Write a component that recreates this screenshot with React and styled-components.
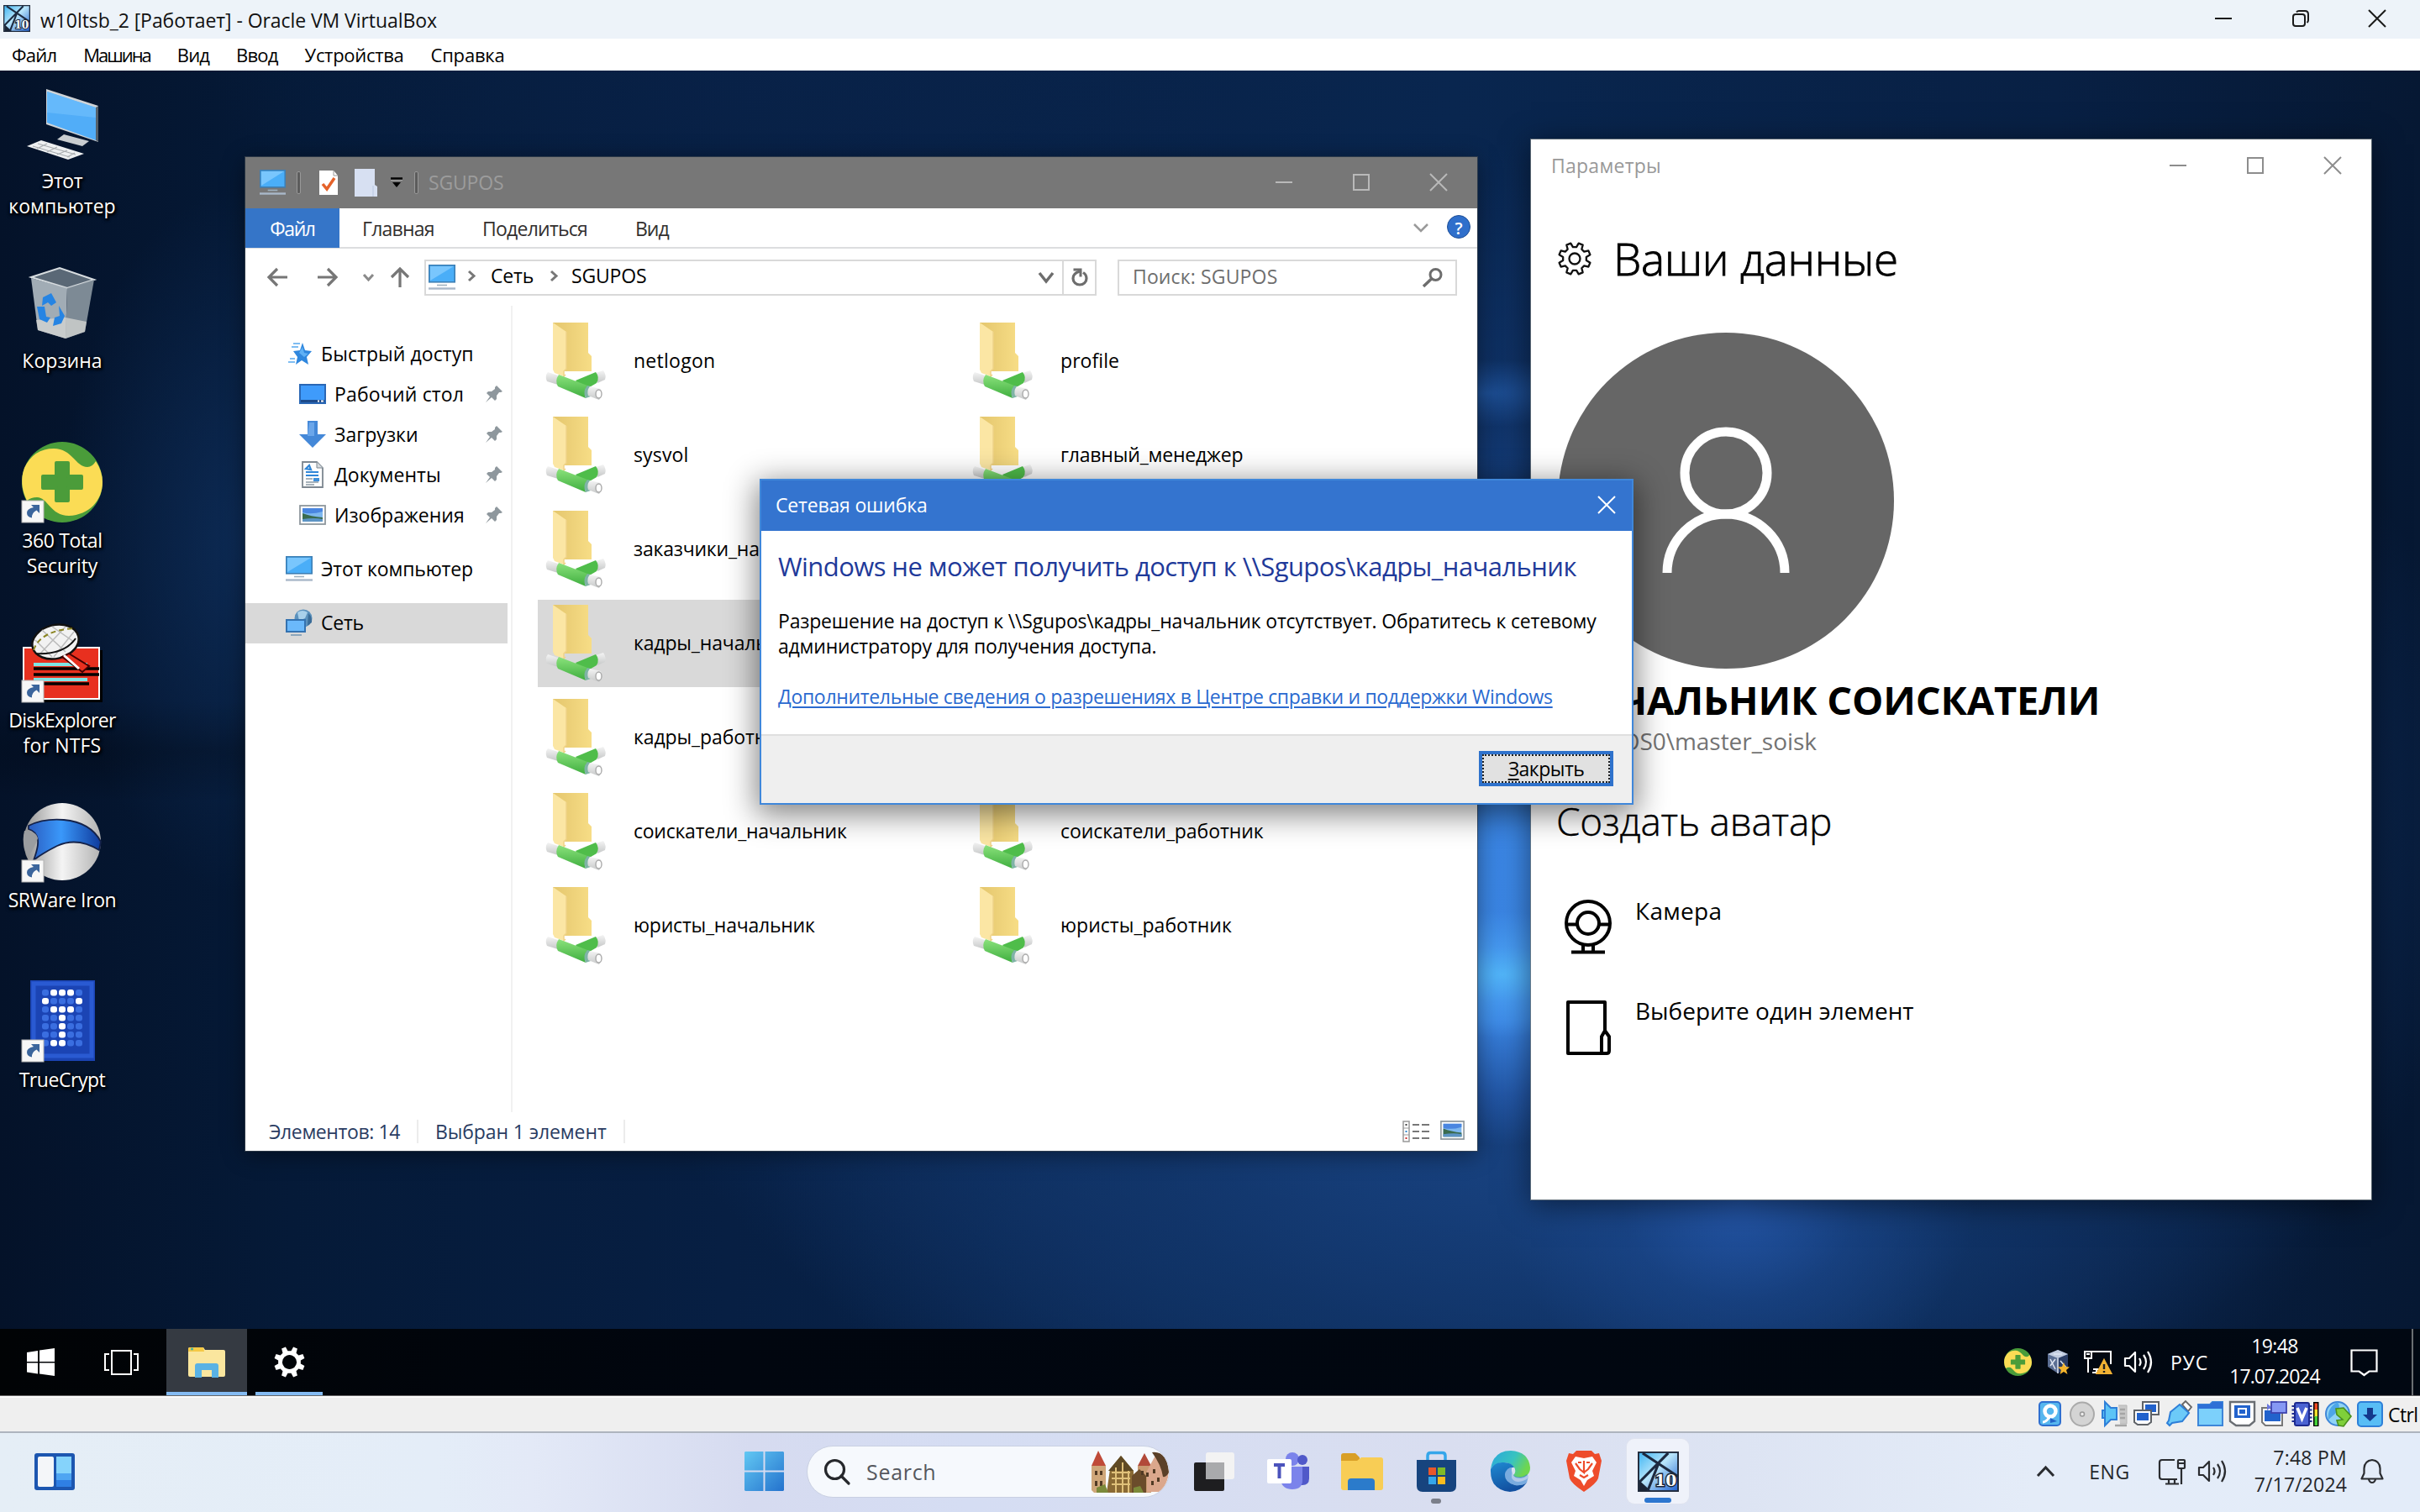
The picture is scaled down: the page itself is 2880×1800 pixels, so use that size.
import React from "react";
import styled, { createGlobalStyle, css } from "styled-components";

const GlobalStyle = createGlobalStyle`
  * { box-sizing: border-box; }
  html, body { margin: 0; padding: 0; overflow: hidden; }
  body { font-family: "Open Sans", "Noto Sans", sans-serif; font-size: 23px; line-height: 30px; color: #000; }
  svg { display: block; flex: none; overflow: visible; }
`;

/* ---------- shared ---------- */
const Text = styled.span`
  white-space: nowrap;
  letter-spacing: ${(p) => p.$ls || 0}px;
`;
const Slot = styled.div`
  display: flex;
  flex: none;
  align-items: center;
  justify-content: center;
  width: ${(p) => p.$w}px;
`;
const Spacer = styled.div`
  flex: 1;
`;

/* ---------- host frame ---------- */
const Screen = styled.div`
  width: 2880px;
  height: 1800px;
  display: grid;
  grid-template-rows: 46px 38px 1578px 42px 96px;
  overflow: hidden;
`;
const HostTitle = styled.header`
  display: flex;
  align-items: center;
  background: #edf3f9;
  padding-left: 4px;
  padding-bottom: 2px;
`;
const HostCaption = styled(Text)`
  margin-left: 12px;
  padding-top: 3px;
  color: #111;
`;
const HostControls = styled.div`
  display: flex;
  margin-left: auto;
  margin-right: 5px;
`;
const HostMenu = styled.nav`
  display: flex;
  align-items: center;
  gap: 32px;
  padding-left: 14px;
  background: #fff;
  font-size: 22px;
`;

/* ---------- guest desktop ---------- */
const Guest = styled.main`
  position: relative;
  display: grid;
  grid-template-rows: 1498px 80px;
  overflow: hidden;
  background:
    radial-gradient(ellipse 150px 75px at 1788px 1076px, #52b6fa 0%, rgba(74, 160, 245, 0.7) 45%, rgba(60, 136, 230, 0) 100%),
    radial-gradient(ellipse 240px 330px at 1790px 950px, #3b86e4 0%, #3a84e2 55%, rgba(42, 100, 190, 0.6) 82%, rgba(30, 78, 150, 0) 100%),
    radial-gradient(ellipse 280px 240px at 2070px 1345px, rgba(36, 86, 168, 0.95) 0%, rgba(28, 74, 146, 0.5) 50%, rgba(20, 60, 120, 0) 100%),
    radial-gradient(ellipse 170px 40px at 1770px 384px, rgba(38, 96, 176, 0.6) 0%, rgba(38, 96, 176, 0) 100%),
    radial-gradient(ellipse 950px 420px at 1850px 1300px, rgba(24, 66, 128, 0.9) 0%, rgba(19, 56, 110, 0.6) 50%, rgba(12, 40, 84, 0) 100%),
    radial-gradient(ellipse 1150px 820px at 1820px 900px, #1f5099 0%, #1c4a8f 35%, rgba(17, 53, 108, 0.85) 60%, rgba(8, 30, 66, 0) 100%),
    radial-gradient(ellipse 220px 420px at 290px 560px, rgba(15, 48, 94, 0.75) 0%, rgba(10, 34, 72, 0) 100%),
    radial-gradient(ellipse 500px 60px at 240px 810px, rgba(2, 12, 28, 0.8) 0%, rgba(2, 12, 28, 0) 100%),
    radial-gradient(ellipse 700px 300px at 950px 0px, rgba(10, 36, 76, 0.5) 0%, rgba(6, 22, 48, 0) 100%),
    linear-gradient(90deg, #041229 0%, #051a38 12%, #071f43 30%, #09264f 60%, #082044 85%, #061833 100%);
`;
const DesktopIcons = styled.div`
  display: flex;
  flex-direction: column;
  width: 148px;
  padding-top: 14px;
`;
const DesktopIcon = styled.div`
  display: flex;
  flex-direction: column;
  align-items: center;
  height: 214px;
  color: #fff;
  text-align: center;
  text-shadow: 0 0 3px #000, 2px 2px 3px #000, 0 2px 4px #000;
`;
const DesktopLabel = styled.div`
  display: flex;
  flex-direction: column;
  margin-top: 6px;
`;

const Windowed = styled.section`
  position: absolute;
  left: ${(p) => p.$x}px;
  top: ${(p) => p.$y}px;
  width: ${(p) => p.$w}px;
  height: ${(p) => p.$h}px;
  display: flex;
  flex-direction: column;
  background: #fff;
`;
const ExplorerWindow = styled(Windowed)`
  box-shadow: 0 0 0 1px rgba(60, 70, 80, 0.7), 0 4px 26px rgba(0, 0, 0, 0.45);
`;
const SettingsWindow = styled(Windowed)`
  box-shadow: 0 0 0 1px rgba(110, 120, 125, 0.8), 0 6px 34px rgba(0, 0, 0, 0.5);
`;
const DialogWindow = styled(Windowed)`
  border: 2px solid #3f87da;
  box-shadow: 0 8px 34px 4px rgba(0, 0, 0, 0.48);
`;

/* ---------- explorer ---------- */
const ExplorerTitle = styled.header`
  display: flex;
  align-items: center;
  height: 61px;
  padding-left: 17px;
  padding-bottom: 1px;
  background: #777;
  color: #9c9c9c;
`;
const TitleName = styled(Text)`
  margin-left: 4px;
`;
const TitleDivider = styled.i`
  width: 5px;
  height: 27px;
  border: 1px solid #989898;
  border-radius: 2px;
  background: #5c5c5c;
`;
const Controls = styled.div`
  display: flex;
  margin-left: auto;
`;
const Ribbon = styled.nav`
  display: flex;
  align-items: center;
  height: 48px;
  border-bottom: 2px solid #dcdddf;
  color: #33302f;
  padding-right: 8px;
`;
const FileTab = styled.div`
  display: flex;
  align-items: center;
  justify-content: center;
  align-self: stretch;
  width: 112px;
  margin-bottom: -1px;
  background: #3575c8;
  color: #fff;
  padding-top: 1px;
`;
const RibbonTab = styled.div`
  display: flex;
  width: ${(p) => p.$w}px;
  padding-left: 27px;
  padding-top: 2px;
`;
const HelpBadge = styled.div`
  display: grid;
  place-items: center;
  width: 28px;
  height: 28px;
  margin: -2px 0 0 22px;
  border-radius: 50%;
  background: #2f6fcb;
  border: 1px solid #1f4f96;
  color: #fff;
  font-weight: 600;
  font-size: 20px;
`;
const NavBar = styled.div`
  display: flex;
  align-items: center;
  height: 68px;
  padding-left: 18px;
`;
const AddressBox = styled.div`
  display: flex;
  align-items: center;
  width: 800px;
  height: 43px;
  border: 2px solid #d9d9d9;
  padding-left: 3px;
`;
const Crumb = styled(Text)`
  margin: -4px ${(p) => p.$mr || 0}px 0 ${(p) => p.$ml}px;
`;
const RefreshCell = styled.div`
  display: grid;
  place-items: center;
  align-self: stretch;
  width: 39px;
  border-left: 2px solid #d9d9d9;
`;
const SearchBox = styled.div`
  display: flex;
  align-items: center;
  justify-content: space-between;
  width: 404px;
  height: 43px;
  margin-left: 25px;
  padding: 0 15px 0 16px;
  border: 2px solid #d9d9d9;
  color: #6e6e6e;
`;
const SearchHint = styled(Text)`
  margin-top: -3px;
`;
const ExplorerBody = styled.div`
  display: grid;
  grid-template-columns: 318px 1fr;
  height: 960px;
`;
const Tree = styled.aside`
  border-right: 2px solid #f1f1f1;
  padding-top: 34px;
`;
const TreeItem = styled.div`
  display: flex;
  align-items: center;
  gap: 10px;
  width: 312px;
  height: 48px;
  margin-top: ${(p) => (p.$apart ? 16 : 0)}px;
  padding-left: ${(p) => (p.$nested ? 64 : 48)}px;
  padding-right: 6px;
  padding-bottom: 2px;
  background: ${(p) => (p.$active ? "#d9d9d9" : "transparent")};
`;
const PinHolder = styled.div`
  margin-left: auto;
`;
const Files = styled.div`
  display: grid;
  grid-template-columns: 500px 500px;
  grid-template-rows: repeat(7, 104px);
  gap: 8px;
  padding: 14px 0 0 30px;
`;
const FileTile = styled.div`
  grid-column: ${(p) => p.$col};
  grid-row: ${(p) => p.$row};
  display: flex;
  align-items: center;
  padding-left: 9px;
  background: ${(p) => (p.$active ? "#d9d9d9" : "transparent")};
`;
const FileName = styled(Text)`
  margin-left: 33px;
  padding-bottom: 2px;
`;
const StatusRow = styled.footer`
  display: flex;
  align-items: center;
  height: 46px;
  padding: 0 15px 0 28px;
  color: #2a3c62;
`;
const StatusCell = styled.div`
  display: flex;
  height: 28px;
  align-items: center;
  padding-right: 20px;
  margin-right: 20px;
  border-right: 2px solid #ececec;
`;
const ViewModes = styled.div`
  display: flex;
  gap: 12px;
  margin-left: auto;
`;

/* ---------- dialog ---------- */
const DialogTitle = styled.header`
  display: flex;
  align-items: center;
  justify-content: space-between;
  height: 60px;
  padding: 0 20px 2px 17px;
  background: #3474cf;
  color: #fff;
`;
const DialogBody = styled.div`
  height: 242px;
  padding: 22px 0 0 20px;
`;
const DialogHeading = styled.h1`
  margin: 0;
  font-weight: 400;
  font-size: 31px;
  line-height: 40px;
  letter-spacing: -0.57px;
  color: #1f3a9a;
  white-space: nowrap;
`;
const DialogText = styled.p`
  display: flex;
  flex-direction: column;
  margin: 30px 0 0;
`;
const DialogLink = styled.a`
  display: inline-block;
  margin-top: 30px;
  color: #2a6ad0;
  letter-spacing: -0.32px;
  white-space: nowrap;
  text-decoration: underline;
  text-decoration-thickness: 2px;
  text-underline-offset: 3px;
`;
const DialogFooter = styled.footer`
  display: flex;
  flex: 1;
  justify-content: flex-end;
  padding: 18px 22px 0 0;
  border-top: 2px solid #dfdfdf;
  background: #efefef;
`;
const CloseButton = styled.button`
  width: 160px;
  height: 42px;
  padding: 0;
  border: 4px solid #2f72cc;
  background: #e1e1e1;
  outline: 2px dotted #222;
  outline-offset: -6px;
  font: inherit;
  line-height: 30px;
  letter-spacing: -0.5px;
  color: #000;
`;
const AccessKey = styled.span`
  text-decoration: underline;
  text-decoration-thickness: 2px;
  text-underline-offset: 3px;
`;

/* ---------- settings ---------- */
const SettingsTitle = styled.header`
  display: flex;
  align-items: center;
  height: 62px;
  padding-left: 24px;
  color: #999;
`;
const SettingsBody = styled.div`
  display: flex;
  flex-direction: column;
  padding: 40px 0 0 32px;
`;
const SettingsHeading = styled.h1`
  display: flex;
  align-items: center;
  gap: 26px;
  height: 80px;
  margin: 0;
  font-weight: 300;
  font-size: 53px;
  -webkit-text-stroke: 0.9px #000;
`;
const Avatar = styled.div`
  display: grid;
  place-items: center;
  width: 400px;
  height: 400px;
  margin: 48px 0 0 0;
  border-radius: 50%;
  background: #666;
`;
const UserName = styled.h2`
  margin: 7px 0 0 4px;
  font-weight: 700;
  font-size: 47px;
  line-height: 60px;
  letter-spacing: -0.22px;
  white-space: nowrap;
`;
const UserLogin = styled.div`
  margin-left: 3px;
  font-size: 28px;
  line-height: 38px;
  letter-spacing: -0.05px;
  color: #737373;
`;
const SubHeading = styled.h3`
  margin: 46px 0 57px -2px;
  font-weight: 300;
  font-size: 46px;
  line-height: 60px;
  letter-spacing: -0.24px;
  -webkit-text-stroke: 0.4px #000;
`;
const Choice = styled.div`
  display: flex;
  align-items: flex-start;
  height: 119px;
  font-size: 28px;
  line-height: 40px;
`;
const ChoiceIcon = styled.div`
  display: flex;
  justify-content: center;
  width: 68px;
  margin: 7px 22px 0 2px;
`;

/* ---------- guest taskbar ---------- */
const GuestBar = styled.footer`
  display: flex;
  align-items: stretch;
  background: linear-gradient(90deg, #010305, #01060f 30%, #010812);
  color: #fff;
  border-bottom: 1px solid #666;
`;
const TaskButton = styled.div`
  display: flex;
  align-items: center;
  justify-content: center;
  width: 96px;
  margin-right: ${(p) => p.$mr || 0}px;
  ${(p) => p.$active && css`background-color: #353a42;`}
  ${(p) => p.$running && css`
    background-image: linear-gradient(#84bbf3, #84bbf3);
    background-size: ${p.$line}px 4px;
    background-position: center bottom;
    background-repeat: no-repeat;
  `}
`;
const GuestClock = styled.div`
  display: flex;
  flex-direction: column;
  align-items: center;
  justify-content: center;
  width: 130px;
  padding-bottom: 4px;
  line-height: 36px;
`;
const ShowDesktop = styled.div`
  width: 10px;
  margin-left: 15px;
  border-left: 2px solid #6b6e72;
`;

/* ---------- VM status bar ---------- */
const VmStatus = styled.div`
  display: flex;
  align-items: center;
  justify-content: flex-end;
  padding-bottom: 1px;
  background: #efefef;
  border-top: 2px solid #fbfbfb;
  overflow: hidden;
`;
const HostKey = styled(Text)`
  width: 38px;
  margin-left: 3px;
`;

/* ---------- host taskbar ---------- */
const HostBar = styled.footer`
  display: flex;
  align-items: center;
  padding-bottom: 3px;
  border-top: 2px solid #aeb4be;
  background: linear-gradient(90deg, #e5eef6 0%, #e4edf8 18%, #e3e9f7 22%, #d6dbf0 31%, #d5ddf3 40%, #d9def0 60%, #dde4f3 72%, #e4ecf8 84%, #e3ecf9 100%);
  color: #25272b;
`;
const SearchPill = styled.div`
  display: flex;
  align-items: center;
  width: 432px;
  height: 62px;
  margin: 0 9px 0 7px;
  padding: 0 0 0 20px;
  border-radius: 31px;
  background: #f6f9fd;
  border: 1px solid #c9d0e2;
  font-size: 25px;
  color: #55585e;
  overflow: hidden;
`;
const PillText = styled(Text)`
  margin: 0 auto 0 20px;
`;
const AppSlot = styled.div`
  position: relative;
  display: flex;
  align-items: center;
  justify-content: center;
  width: 88px;
  height: 80px;
`;
const ActiveApp = styled(AppSlot)`
  width: 74px;
  height: 77px;
  margin: 0 7px;
  border-radius: 9px;
  background: #eff2fa;
  box-shadow: 0 0 0 1px #dfe3ef;
`;
const RunningMark = styled.i`
  position: absolute;
  bottom: ${(p) => (p.$wide ? 1 : 2)}px;
  width: ${(p) => (p.$wide ? 32 : 12)}px;
  height: 6px;
  border-radius: 3px;
  background: ${(p) => (p.$wide ? "#2c76cf" : "#7b7f8a")};
`;
const HostClock = styled.div`
  display: flex;
  flex-direction: column;
  align-items: flex-end;
  width: 137px;
  padding-right: 1px;
  margin-top: -2px;
  line-height: 32px;
`;

/* ---------- icons ---------- */
const VmIcon = ({ w, h }) => (
  <svg width={w} height={h} viewBox="0 0 50 50" preserveAspectRatio="none">
    <defs>
      <linearGradient id="vmg" x1="0" y1="0" x2="1" y2="1">
        <stop offset="0" stopColor="#3db4f2" /><stop offset=".45" stopColor="#b9e6fb" /><stop offset="1" stopColor="#1f5fd0" />
      </linearGradient>
    </defs>
    <rect x="1" y="1" width="48" height="48" fill="url(#vmg)" stroke="#222c3d" strokeWidth="2" />
    <path d="M2 36L16 49H2z" fill="#1b2536" />
    <path d="M2 38L37 2M6 2L49 31M26 13L12 49" stroke="#1d2a40" strokeWidth="3.2" fill="none" />
    <text x="34" y="43" fontSize="19" fontWeight="700" textAnchor="middle" fill="#fff" stroke="#1b2536" strokeWidth="3" paintOrder="stroke" fontFamily="DejaVu Serif">10</text>
  </svg>
);
const Minimize = ({ c, s = 20, t = 2 }) => <svg width={s} height={s}><path d={`M0 ${s / 2}H${s}`} stroke={c} strokeWidth={t} /></svg>;
const Maximize = ({ c, s = 20, t = 2 }) => <svg width={s} height={s}><rect x="1" y="1" width={s - 2} height={s - 2} fill="none" stroke={c} strokeWidth={t} /></svg>;
const Cross = ({ c, s = 20, t = 2 }) => <svg width={s} height={s}><path d={`M0 0L${s} ${s}M${s} 0L0 ${s}`} stroke={c} strokeWidth={t} /></svg>;
const Restore = () => (
  <svg width="20" height="20" fill="none" stroke="#1a1a1a" strokeWidth="2">
    <rect x="1" y="5" width="14" height="14" rx="3" /><path d="M5 2.500Q6 1 8 1h7q4 0 4 4v7q0 2-1.500 3" />
  </svg>
);
const Chevron = ({ w, h, c, t = 3, dir = "down" }) => (
  <svg width={w} height={h} fill="none" stroke={c} strokeWidth={t}>
    <path d={dir === "down" ? `M1 1L${w / 2} ${h - 1}L${w - 1} 1` : dir === "up" ? `M1 ${h - 1}L${w / 2} 1L${w - 1} ${h - 1}` : `M1 1L${w - 1} ${h / 2}L1 ${h - 1}`} />
  </svg>
);
const Arrow = ({ r }) => (
  <svg width="24" height="24" viewBox="0 0 24 24" fill="none" stroke="#767676" strokeWidth="3.2">
    <path transform={`rotate(${r} 12 12)`} d="M24 12H2M12 2L2 12l10 10" />
  </svg>
);
const Monitor = ({ w = 32, h = 30 }) => (
  <svg width={w} height={h} viewBox="0 0 32 30" preserveAspectRatio="none">
    <rect x=".8" y=".8" width="30.400" height="20" fill="#4aaef8" stroke="#3d7fb5" strokeWidth="1.600" />
    <path d="M2 2h28L2 19z" fill="#79c6fd" />
    <path d="M10 24.500h12" stroke="#9fb1bf" strokeWidth="1.600" />
    <path d="M0 28.500h32" stroke="#a9b8c9" strokeWidth="2.400" />
  </svg>
);
const CheckDoc = () => (
  <svg width="24" height="31"><path d="M1 1h17l5 6v23H1z" fill="#fff" /><path d="M18 1v6h5" fill="none" stroke="#999" /><path d="M5 17l5 6 9-13" fill="none" stroke="#e5622a" strokeWidth="3.500" /></svg>
);
const BlankDoc = () => (
  <svg width="27" height="33"><path d="M0 0h24v19l3 2v12H0z" fill="#d7e0f2" /><path d="M22 20v13" stroke="#b9c6e0" /></svg>
);
const Dropdown = () => <svg width="16" height="18"><path d="M1 4.500h14" stroke="#000" strokeWidth="2.500" /><path d="M1 6.500h14" stroke="#aaa" /><path d="M3 9h10l-5 6z" fill="#000" /></svg>;
const Refresh = () => (
  <svg width="20" height="22" fill="none" stroke="#6d6d6d">
    <path d="M10 4C4.500 5.500 2 8.500 2 12.500a8 7.500 0 0 0 16 0C18 9.500 16.500 7 14 5.500" strokeWidth="3.200" />
    <path d="M2.500 2H11v8.500" strokeWidth="3" />
  </svg>
);
const Loupe = () => <svg width="24" height="23" fill="none" stroke="#6d6d6d"><circle cx="15.500" cy="8" r="6.500" strokeWidth="3" /><path d="M11 12.500L1 22" strokeWidth="3.500" /></svg>;
const Pin = () => <svg width="20" height="20" viewBox="0 0 20 20"><path d="M13 0l7 7-2 1-2 0-3 4v4l-2 2-4-4-7 6 5-7-4-4 2-2h4l4-3V2z" fill="#8e979d" /></svg>;
const Star = () => (
  <svg width="32" height="28"><path d="M20 1l3 9 8 1-6 7 2 9-8-5-7 5 2-9-5-7 8-1z" fill="#2f87de" /><path d="M20 6l2 7 5 1-5 4-6-5z" fill="#5fb0f5" /><path d="M9 2h8M7 6h8M5 20h6M3 24h8" stroke="#7fbdf2" strokeWidth="2" /></svg>
);
const DesktopGlyph = () => (
  <svg width="32" height="24"><rect x="1" y="1" width="30" height="22" fill="#3f9bfb" stroke="#2a67b5" strokeWidth="2" /><path d="M2 20.500h28" stroke="#1d4a8a" strokeWidth="3" /><path d="M22 20.500h2M26 20.500h3" stroke="#fff" strokeWidth="2" /></svg>
);
const DownGlyph = () => <svg width="32" height="32"><path d="M10 0h12v16h10L16 32 0 16h10z" fill="#4488d8" /><path d="M12 2h6v16h-8z" fill="#6ba6ea" /></svg>;
const DocGlyph = () => (
  <svg width="32" height="32"><path d="M4 1h17l7 7v23H4z" fill="#fdfdfd" stroke="#7d8790" strokeWidth="1.800" /><path d="M21 1v7h7" fill="#d5dade" stroke="#7d8790" /><path d="M8 9l4-4 2 5zM8 13h15M8 17h15" stroke="#2f86d8" strokeWidth="2.200" fill="none" /><path d="M8 21h8M8 25h15M8 28h10" stroke="#8b99a5" strokeWidth="1.600" /><path d="M17 20h7v4h-7z" fill="#3f8fd9" /></svg>
);
const PicGlyph = ({ w = 32, h = 24 }) => (
  <svg width={w} height={h} viewBox="0 0 32 24" preserveAspectRatio="none"><rect x="1" y="1" width="30" height="22" fill="#fff" stroke="#8e979d" strokeWidth="1.800" /><path d="M4 4h24v16H4z" fill="#7db7ef" /><path d="M4 4h24v4q-14 4-24 1z" fill="#4a86e0" /><path d="M4 10q10 4 24 5v5H4z" fill="#3a6b4e" /><path d="M4 17q14-2 24 0v3H4z" fill="#5c94c4" /></svg>
);
const NetworkGlyph = () => (
  <svg width="32" height="32"><circle cx="21" cy="11" r="10.500" fill="#5c92bd" /><path d="M14 4q6-4 12 0l-3 7-7 3z" fill="#a9d0ea" /><path d="M27 5q5 5 4 11l-5 4z" fill="#3a6c98" /><rect x="1" y="13" width="22" height="14" fill="#6bb9fb" stroke="#3472b0" strokeWidth="2" /><path d="M6 31h13" stroke="#8ba6bb" strokeWidth="2" /></svg>
);
const NetFolder = () => (
  <svg width="72" height="92" viewBox="0 0 72 92">
    <defs>
      <linearGradient id="fb" x1="0" y1="0" x2="1" y2="0"><stop offset="0" stopColor="#e4c66d" /><stop offset="1" stopColor="#f7dd86" /></linearGradient>
      <linearGradient id="fg" x1="0" y1="0" x2="0" y2="1"><stop offset="0" stopColor="#8be27c" /><stop offset="1" stopColor="#3fae3f" /></linearGradient>
      <linearGradient id="fe" x1="0" y1="0" x2="0" y2="1"><stop offset="0" stopColor="#f4f4f4" /><stop offset="1" stopColor="#c6c8c8" /></linearGradient>
    </defs>
    <path d="M9 0h42v36l4 4v18H22L9 40z" fill="url(#fb)" />
    <path d="M9 0l16 11v44l-3 3v6l-11-4L9 56z" fill="#fbe6a4" />
    <path d="M25 11v44l-3 3v6l2-2" fill="none" stroke="#f0d388" strokeWidth="1.500" />
    <path d="M60 60l9-3q4 6 2 11l-9 4z" fill="url(#fe)" />
    <path d="M3 59l12 4v11L2 70q-3-6 1-11z" fill="url(#fe)" />
    <path d="M36 69l24-10q5 6 1 13L44 82z" fill="#4fbd4a" />
    <path d="M16 62l34 13q-5 7-2 15L15 76q-4-7 1-14z" fill="url(#fg)" />
    <path d="M50 75q-6 7-2 15l6-2V76z" fill="#7fb3a6" />
    <path d="M53 76l13 3q3 7-2 13l-13-5q-2-6 2-11z" fill="url(#fe)" />
    <ellipse cx="63.500" cy="85" rx="3.500" ry="5" fill="#fff" stroke="#aaa" strokeWidth="1.400" />
  </svg>
);
const DetailsView = () => (
  <svg width="33" height="26">
    <path d="M1 1h7v24H1z" fill="#fff" stroke="#999" strokeWidth="1.500" /><path d="M1 9h7M1 17h7" stroke="#999" />
    <path d="M12 5h8M23 5h9M12 13h8M23 13h9M12 21h8M23 21h9" stroke="#777" strokeWidth="2.200" />
    <path d="M3.500 5h2" stroke="#444" strokeWidth="2" /><path d="M3.500 13h2" stroke="#38c" strokeWidth="2" /><path d="M3.500 21h2" stroke="#c33" strokeWidth="2" />
  </svg>
);
const gearPath = (n, ro, ri, cx, cy) => {
  const pts = [];
  for (let i = 0; i < n; i++) {
    const a = (i / n) * Math.PI * 2 - Math.PI / 2, s = Math.PI / n;
    [[-0.62, ri], [-0.36, ro], [0.36, ro], [0.62, ri]].forEach(([k, r]) => {
      pts.push(`${(cx + Math.cos(a + k * s) * r).toFixed(2)} ${(cy + Math.sin(a + k * s) * r).toFixed(2)}`);
    });
  }
  return `M${pts.join("L")}Z`;
};
const OutlineGear = () => (
  <svg width="40" height="40" fill="none" stroke="#111" strokeWidth="2.300" strokeLinejoin="round">
    <path d={gearPath(8, 19, 14, 20, 20)} transform="rotate(22.500 20 20)" /><circle cx="20" cy="20" r="6.500" />
  </svg>
);
const SolidGear = () => (
  <svg width="37" height="37"><path fillRule="evenodd" fill="#fff" d={`${gearPath(8, 18.5, 13.5, 18.5, 18.5)}M10 18.500a8.500 8.500 0 1 0 17 0a8.500 8.500 0 1 0-17 0z`} transform="rotate(22.500 18.500 18.500)" /></svg>
);
const Person = () => (
  <svg width="152" height="176" fill="none" stroke="#fff" strokeWidth="11"><circle cx="76" cy="55" r="49" /><path d="M6 174a70 70 0 0 1 140 0" /></svg>
);
const Webcam = () => (
  <svg width="56" height="66" fill="none" stroke="#000" strokeWidth="4"><circle cx="28" cy="28" r="26" /><circle cx="28" cy="28" r="13" /><path d="M2 29.500h13M41 29.500h13M22 54v8M34 54v8M8 62.500h40" /></svg>
);
const ItemDoc = () => (
  <svg width="54" height="66" fill="none" stroke="#000" strokeWidth="4"><path d="M47 38V3H3v61h46q3 0 3-3V44l-5-7-4 7v20" strokeLinejoin="round" /></svg>
);

const Shortcut = () => (
  <g><rect x="0" y="70" width="26" height="26" fill="#f7f7f7" stroke="#b5b5b5" /><path d="M11 75h10v10l-3.500-3.500q-6 3-5.500 9-6-1-6-6 0-5 8-6.500z" fill="#3b659c" /></g>
);
const BigIcon = ({ children, link }) => <svg width="96" height="96" viewBox="0 0 96 96">{children}{link && <Shortcut />}</svg>;
const PcArt = () => (
  <BigIcon>
    <path d="M29 8l62 20v43L29 50z" fill="#cfd3d6" /><path d="M30 11l58 19v39L30 48z" fill="#51adf8" /><path d="M30 11l58 19v12L30 36z" fill="#6dbdfc" opacity=".7" />
    <path d="M88 30l3-2v43l-3-2z" fill="#55606a" />
    <path d="M50 62l30 8-8 6-30-8z" fill="#c9cdd0" /><path d="M6 76l17-7 51 16-19 7z" fill="#eef0f1" /><path d="M13 76l44 13M19 73l45 13M18 79l12-6M30 83l12-6M42 86l12-5M54 89l9-5" stroke="#a9adb0" strokeWidth="1.200" />
  </BigIcon>
);
const BinArt = () => (
  <BigIcon>
    <path d="M11 18L45 7l41 14-32 10z" fill="#5a6876" stroke="#d8dde0" strokeWidth="2" />
    <path d="M11 19l43 12-2 60-33-10z" fill="#aab4bd" opacity=".95" /><path d="M54 31l32-10-11 62-23 8z" fill="#84909b" opacity=".95" />
    <path d="M17 69l35-3 25 5-2 12-23 8-33-10z" fill="#d7d7d4" opacity=".75" />
    <path d="M25 42l10-5 6 11-6 4-4-4-7 4zM18 53l9 0 2 12 5 1-4 6-9-4zM44 52l7 12-4 9-10 3 2-10 6-2z" fill="#2684e3" />
  </BigIcon>
);
const Mark360 = () => (
  <g>
    <circle cx="48" cy="48" r="48" fill="#4a9c3a" />
    <path d="M3 31Q14 8 38 8c22 0 26 22 40 22q6 0 10-7 8 12 8 25c0 22-16 39-40 40C34 88 31 66 18 66q-7 0-12 4-10-20-3-39z" fill="#fbdc55" />
    <path d="M41 25h14v16h16v14H55v15H41V55H25V41h16z" fill="#4b9c3a" stroke="#4b9c3a" strokeWidth="4" strokeLinejoin="round" />
  </g>
);
const DiskArt = () => (
  <BigIcon link>
    <rect x="6" y="34" width="90" height="62" fill="#000" /><rect x="2" y="31" width="90" height="61" fill="#e8301f" stroke="#fff" strokeWidth="2" />
    <path d="M14 51h64M14 69h64" stroke="#7fe5e5" strokeWidth="4" /><path d="M14 56h78M14 63h78M14 74h66" stroke="#000" strokeWidth="3.500" />
    <ellipse cx="40" cy="24" rx="28" ry="20" fill="#f2f2f2" stroke="#111" strokeWidth="2.500" transform="rotate(-14 40 24)" />
    <path d="M24 10l28 26M36 6l26 18M16 22l20 20M52 6L22 38M62 12L38 42" stroke="#bbb" strokeWidth="1.500" />
    <path d="M14 34q8-24 50-26" fill="none" stroke="#8a8420" strokeWidth="2" strokeDasharray="6 4" />
    <path d="M16 38q34 2 48-18" fill="none" stroke="#111" strokeWidth="2" />
    <path d="M56 38l24 15-8 7-24-18z" fill="#e8301f" stroke="#400" strokeWidth="2" /><path d="M50 40l18 16" stroke="#fff" strokeWidth="3" />
  </BigIcon>
);
const IronArt = () => (
  <BigIcon link>
    <defs>
      <linearGradient id="ib" x1="0" y1="0" x2="1" y2="0"><stop offset="0" stopColor="#2a5cc0" /><stop offset=".45" stopColor="#3a98fa" /><stop offset="1" stopColor="#0f3a9c" /></linearGradient>
      <linearGradient id="is" x1="0" y1="0" x2="1" y2="0"><stop offset="0" stopColor="#8f8f8f" /><stop offset=".5" stopColor="#f4f4f4" /><stop offset="1" stopColor="#b2b2b2" /></linearGradient>
    </defs>
    <circle cx="48" cy="48" r="46" fill="url(#is)" />
    <path d="M8 29q18-9 42-7 32 3 44 26l-2 10Q66 42 42 53 24 62 14 70q6-16 5-24-1-10-11-13z" fill="url(#ib)" stroke="#14224a" strokeWidth="1.800" />
    <path d="M3 35q14 0 16 9-4 12-12 22-8-15-4-31z" fill="#9b9da0" />
  </BigIcon>
);
const dots = ["01110", "10001", "01110", "00100", "00100", "00100", "01100"];
const TrueArt = () => (
  <BigIcon link>
    <rect x="10" y="-1" width="77" height="96" fill="#1b44b4" /><rect x="14" y="3" width="69" height="86" fill="none" stroke="#2a5ad2" strokeWidth="5" />
    {dots.map((row, y) => row.split("").map((d, x) => (
      <rect key={`${x}-${y}`} x={24 + x * 10} y={10 + y * 10} width="8" height="7.500" rx="3" fill={d === "1" ? "#fff" : "#3a6ee0"} />
    )))}
  </BigIcon>
);

const WinLogo = () => (
  <svg width="33" height="33" fill="#fff"><path d="M0 5l13-2v13H0zM15 2.500L33 0v16H15zM0 17.500h13v13L0 28.500zM15 17.500h18V33l-18-2.500z" /></svg>
);
const TaskViewGlyph = () => (
  <svg width="41" height="30" fill="none" stroke="#fff" strokeWidth="2"><rect x="9" y="1" width="23" height="28" /><path d="M6 5H1v19h5M35 5h5v19h-5" /></svg>
);
const FolderGlyph = () => (
  <svg width="44" height="36"><path d="M0 2q0-2 2-2h16l2 3h22q2 0 2 2v28q0 2-2 2H2q-2 0-2-2z" fill="#fae69e" /><path d="M0 2q0-2 2-2h16l1 5H0z" fill="#f5c945" /><path d="M3 2h3" stroke="#4bb4a0" strokeWidth="2.500" /><path d="M8 36V22q0-3 3-3h22q3 0 3 3v14h-8v-9H16v9z" fill="#5ab2e4" /></svg>
);
const TrayShield = () => <svg width="33" height="33" viewBox="0 0 96 96"><Mark360 /></svg>;
const VBoxCube = () => (
  <svg width="27" height="31"><path d="M13 1l12 5v15l-12 8L1 21V6z" fill="#5b6e93" /><path d="M13 11l12-5v15l-12 8z" fill="#2c3e66" /><path d="M13 1l12 5-12 5L1 6z" fill="#c3cde0" /><path d="M13 11v18M4 12l6 12M10 12l-6 8M16 14l7 8M8 6h10" stroke="#dfe6f2" strokeWidth="1.500" /><path d="M20 16l2 5 5 .5-4 3.500 1.500 5-4.500-3-4.500 3 1.500-5-4-3.500 5-.5z" fill="#f5b52c" /></svg>
);
const NetWarn = () => (
  <svg width="34" height="30" fill="none" stroke="#fff" strokeWidth="2"><path d="M10 2h22v15M11 23h8M15 23v4M10 27h8" /><rect x="1" y="2" width="8" height="8" /><path d="M3 5h4M5 10v17" /><path d="M24 12l8.500 16h-17z" fill="#f2b233" stroke="#f2b233" /><path d="M24 17v6M24 25v2" stroke="#222" strokeWidth="2.400" /></svg>
);
const Speaker = ({ c }) => (
  <svg width="34" height="29" fill="none" stroke={c} strokeWidth="2.200" strokeLinejoin="round"><path d="M1 10h5l7-7v23l-7-7H1z" /><path d="M18 10q3 4.500 0 9M23 6q6 8.500 0 17M28 2q8 12.500 0 25" /></svg>
);
const NoteGlyph = () => <svg width="33" height="32" fill="none" stroke="#fff" strokeWidth="2.200"><path d="M1.500 1.500h30v25h-9l-6 4.500-6-4.500h-9z" /></svg>;

/* VM device indicators */
const Dev = ({ children, w = 31 }) => <svg width={w} height="31" viewBox={`0 0 ${w} 31`}>{children}</svg>;
const devices = [
  <Dev w={28}><rect x="1" y="1" width="25" height="28" rx="4" fill="#56b6ee" stroke="#2e6fd0" strokeWidth="2" /><circle cx="14" cy="12" r="6.500" fill="none" stroke="#fff" strokeWidth="4.500" /><path d="M5 25q4 0 8-6" stroke="#fff" strokeWidth="3" fill="none" /><path d="M14 20l8 4-8 2z" fill="#2363c8" /></Dev>,
  <Dev><circle cx="15" cy="15.500" r="14" fill="#d4d4d4" stroke="#aaa" strokeWidth="2" /><circle cx="15" cy="15.500" r="2.500" fill="#eee" stroke="#999" strokeWidth="1.500" /></Dev>,
  <Dev><path d="M20 5h10v22h-8" fill="#c9c9c9" stroke="#b5b5b5" /><path d="M22 10h6M22 15h6M22 20h6M16 29h14" stroke="#a5a5a5" strokeWidth="2.500" /><path d="M1 11h4v9H1z" fill="#5cc4f6" stroke="#2e7fd8" strokeWidth="2" /><path d="M4 1l7 7h7v14h-7l-7 7z" fill="#5cc4f6" stroke="#2e7fd8" strokeWidth="2" /></Dev>,
  <Dev><rect x="11" y="1" width="19" height="15" fill="#fff" stroke="#5f6368" strokeWidth="2" /><rect x="14" y="4" width="13" height="9" fill="#2262cc" /><path d="M1 11h20v14l-4 3H5l-4-3z" fill="#fff" stroke="#5f6368" strokeWidth="2" /><rect x="4" y="14" width="14" height="9" fill="#2262cc" /></Dev>,
  <Dev><path d="M20 4l4-4 7 7-4 5z" fill="#fff" stroke="#666" strokeWidth="1.800" /><path d="M17 4l11 10-8 10-12 2-3 3-3-3 2-3 2-10z" fill="#6ccaf8" stroke="#2e7fd8" strokeWidth="2" /></Dev>,
  <Dev><path d="M1 4h14l3-3h12v28H1z" fill="#7cd0fb" stroke="#3e86d8" strokeWidth="2" /><path d="M1 4h14l3-3h12v8H1z" fill="#2f70d6" /></Dev>,
  <Dev><path d="M1 1h29v23l-6 5H8l-7-5z" fill="#fff" stroke="#6a6e73" strokeWidth="2.400" /><rect x="6" y="5" width="19" height="15" fill="#2262cc" /><rect x="11" y="9" width="9" height="7" fill="none" stroke="#fff" strokeWidth="2" /></Dev>,
  <Dev><path d="M1 8h24v21H5l-4-4z" fill="#fff" stroke="#777" strokeWidth="2" /><path d="M4 11h19v13H4z" fill="#2262cc" /><rect x="12" y="1" width="18" height="13" fill="#8698f4" stroke="#3e43ae" strokeWidth="1.800" /><path d="M7 3l5 4-5 4z" fill="#6a78e0" /></Dev>,
  <Dev w={32}><rect x="3" y="2" width="17" height="27" rx="2" fill="#4a62d2" stroke="#1d2a8f" strokeWidth="2" /><path d="M1 5v22M22 5v22" stroke="#1d2a8f" strokeWidth="3" strokeDasharray="2 2.500" /><path d="M6 8l5.500 13L17 8" fill="none" stroke="#fff" strokeWidth="3.500" /><rect x="25" y="1" width="6.500" height="29" fill="#000" /><rect x="26.500" y="2.500" width="3.500" height="8" fill="#f04a24" /><rect x="26.500" y="10" width="3.500" height="9" fill="#f5e02c" /><rect x="26.500" y="18" width="3.500" height="11" fill="#46d23a" /></Dev>,
  <Dev><circle cx="15" cy="15" r="14" fill="#8fd3f5" stroke="#3e86d8" strokeWidth="2" /><path d="M4 22Q2 8 15 1q5 8-3 14z" fill="#4da6e8" /><path d="M13 9l9-1 9 10-9 12-6-1-2-6 7-1-7-6z" fill="#7fcf3a" stroke="#4a8f1e" strokeWidth="1.600" /></Dev>,
  <Dev><rect x="1" y="1" width="29" height="29" rx="4" fill="#58bdf5" stroke="#2e7fd8" strokeWidth="2" /><path d="M12 8h7v8h5l-8.500 8L7 16h5z" fill="#14388c" /></Dev>,
];

/* host taskbar icons */
const Widgets = () => (
  <svg width="48" height="44"><rect width="48" height="44" rx="3" fill="#1c56b0" /><rect x="4" y="4" width="19" height="36" rx="2" fill="#f4f6f9" /><path d="M26 4h18v20H26z" fill="#85d3fb" /><path d="M26 24h18v8H26z" fill="#4fa5f2" /><path d="M26 32h18v8H26z" fill="#2f7fe4" /></svg>
);
const Win11 = () => (
  <svg width="47" height="47"><defs><linearGradient id="w11" x1="0" y1="0" x2="1" y2="1"><stop offset="0" stopColor="#62c8f3" /><stop offset="1" stopColor="#2472cd" /></linearGradient></defs><path d="M1 0h21.500v22.500H0V1zM24.500 0H46l1 1v21.500H24.500zM0 24.500h22.500V47H1l-1-1zM24.500 24.500H47V46l-1 1H24.500z" fill="url(#w11)" /></svg>
);
const PillLoupe = () => <svg width="30" height="30" fill="none" stroke="#26282c" strokeWidth="3.200"><circle cx="12.500" cy="12.500" r="11" /><path d="M20 20l9 9" strokeLinecap="round" /></svg>;
const Town = () => (
  <svg width="92" height="50">
    <path d="M0 18h17v32H3l-3-3z" fill="#cfa77a" /><path d="M8 0l9 18H0z" fill="#bf4a38" />
    <path d="M22 22L35 6l15 18v26H18z" fill="#8a6a34" /><path d="M35 6l15 18H20z" fill="#5f4a24" /><path d="M24 26h22M24 33h22M24 40h22M29 20v30M37 14v36M44 24v26" stroke="#e0c17a" strokeWidth="2" />
    <path d="M55 18h16v32H55z" fill="#c99b72" /><path d="M63 3l8 15H55z" fill="#b24a3a" /><path d="M48 30l9-8 8 8v20H48z" fill="#6b4c2b" />
    <path d="M66 24L77 4q12 6 15 20-1 16-10 25H66z" fill="#dba78c" /><path d="M72 2q18-2 20 24-3 6-7 5-2-14-13-29z" fill="#5b4028" />
    <path d="M4 24h3v5H4zM10 24h3v5h-3zM4 36h3v6H4zM10 36h3v6h-3zM59 24h3v5h-3zM65 26h3v5h-3zM73 22h3v5h-3zM78 32h3v5h-3zM71 36h3v5h-3z" fill="#513a24" />
    <path d="M6 50v-6l10-4 4 10zM50 50v-6l8-2 4 8z" fill="#7c8a3a" />
  </svg>
);
const TaskView11 = () => <svg width="48" height="46"><rect x="14" y="0" width="34" height="32" rx="3" fill="#f3f3f3" /><rect x="0" y="12" width="36" height="34" rx="2" fill="#1e1e20" /><path d="M14 12h22v20H14z" fill="#a9aaac" /></svg>;
const Teams = () => (
  <svg width="50" height="45"><circle cx="30" cy="8" r="8" fill="#7b83eb" /><circle cx="42" cy="9" r="6" fill="#5059c9" /><path d="M34 17h16v14q0 8-8 8h-8z" fill="#5059c9" /><path d="M16 17h26v16q0 11-12 11t-14-11z" fill="#7b83eb" /><rect x="0" y="8" width="29" height="29" rx="2" fill="#fff" /><path d="M8 15h13M14.500 15v16" stroke="#4b53bc" strokeWidth="4" /></svg>
);
const Folder11 = () => (
  <svg width="50" height="44"><path d="M0 3q0-3 3-3h14l5 5v6H0z" fill="#d99f26" /><path d="M0 9h19l5-4h23q3 0 3 3v33q0 3-3 3H3q-3 0-3-3z" fill="#f8cd55" /><path d="M8 44V34q0-4 4-4h24q4 0 4 4v10z" fill="#2b7bcb" /></svg>
);
const Store = () => (
  <svg width="47" height="48"><path d="M13 10V5q0-3.500 3.500-3.500h14Q34 1.500 34 5v5" fill="none" stroke="#35a6ea" strokeWidth="3.500" /><path d="M0 10h47v31q0 7-7 7H7q-7 0-7-7z" fill="#17447e" /><path d="M14 19h9v9h-9z" fill="#e9572b" /><path d="M25 19h9v9h-9z" fill="#7fba28" /><path d="M14 30h9v9h-9z" fill="#35a6ea" /><path d="M25 30h9v9h-9z" fill="#fbbc1e" /></svg>
);
const Edge = () => (
  <svg width="48" height="49">
    <defs>
      <linearGradient id="eg" x1="0" y1="0" x2="1" y2=".4"><stop offset="0" stopColor="#2aa7dc" /><stop offset=".6" stopColor="#38c3c0" /><stop offset="1" stopColor="#6fd64f" /></linearGradient>
      <linearGradient id="ed" x1="0" y1="0" x2=".4" y2="1"><stop offset="0" stopColor="#1f8ad2" /><stop offset="1" stopColor="#1250a0" /></linearGradient>
    </defs>
    <path d="M1 22Q4 0 25 0q21 1 23 20 0 11-12 12-7 0-8-3 4-4 1-9-4-6-12-6Q6 14 1 22z" fill="url(#eg)" />
    <path d="M1 22q5-9 16-8 9 0 12 6-9-1-11 8 0 10 12 13 8 1 14-3-8 11-20 11Q0 47 1 22z" fill="url(#ed)" />
    <path d="M18 28q0-7 8-8-1 9 6 11 7 1 12-3l2 2-2 8q-6 4-14 3-12-3-12-13z" fill="#2a7fcf" opacity=".55" />
    <path d="M29 20q3 5-1 9 1 4 9 4 8-1 11-9 0 6-4 10-12 6-17 0-3-4 2-14z" fill="#d8def0" opacity=".6" />
  </svg>
);
const Brave = () => (
  <svg width="42" height="49"><path d="M8 4l4-4h18l4 4 5-1 3 9-4 21q-2 6-17 16Q6 39 4 33L0 12l3-9z" fill="#ee4c2b" /><path d="M21 9l10-2 5 7-5 10 2 6-8 5-4 7-4-7-8-5 2-6-5-10 5-7z" fill="#fff" /><path d="M21 12v14l-5-4-5-7M21 26l5-4 5-7M16 29l5 3 5-3M14 14h4M24 14h4" stroke="#ee4c2b" strokeWidth="2.200" fill="none" /></svg>
);
const MonitorLine = () => (
  <svg width="33" height="32" fill="none" stroke="#2a2c30" strokeWidth="2.200"><path d="M19 2H4Q1 2 1 5v17q0 3 3 3h18M8 30.500h16M12 25v5M19 25v5" /><rect x="23" y="2" width="8" height="10" rx="1" /><path d="M27 12v19M23 6h8" /></svg>
);
const Bell = () => (
  <svg width="28" height="29" fill="none" stroke="#2a2c30" strokeWidth="2.200" strokeLinejoin="round"><path d="M14 1q-9 1-9.500 10v6L1.500 23.500h25L23.500 17v-6Q23 2 14 1z" /><path d="M10 24q1 4 4 4t4-4" /></svg>
);

/* ---------- data ---------- */
const menu = [["Файл", -0.75], ["Машина", -2.05], ["Вид", -0.85], ["Ввод", -0.8], ["Устройства", -0.3], ["Справка", -0.2]];
const shortcuts = [
  { art: <PcArt />, lines: [["Этот", -0.4], ["компьютер", 0]] },
  { art: <BinArt />, lines: [["Корзина", 0.05]] },
  { art: <BigIcon link><Mark360 /></BigIcon>, lines: [["360 Total", -0.36], ["Security", -0.15]] },
  { art: <DiskArt />, lines: [["DiskExplorer", -0.7], ["for NTFS", 0.17]] },
  { art: <IronArt />, lines: [["SRWare Iron", -0.38]] },
  { art: <TrueArt />, lines: [["TrueCrypt", -0.45]] },
];
const tree = [
  { icon: <Star />, name: "Быстрый доступ", ls: 0.08 },
  { icon: <DesktopGlyph />, name: "Рабочий стол", ls: 0.17, nested: true },
  { icon: <DownGlyph />, name: "Загрузки", ls: 0.04, nested: true },
  { icon: <DocGlyph />, name: "Документы", ls: 0.11, nested: true },
  { icon: <PicGlyph />, name: "Изображения", ls: 0, nested: true },
  { icon: <Monitor />, name: "Этот компьютер", ls: -0.17, apart: true },
  { icon: <NetworkGlyph />, name: "Сеть", ls: -0.24, apart: true, active: true },
];
const files = [
  ["netlogon", 0.26, 1, 1], ["sysvol", 0.15, 1, 2], ["заказчики_начальник", -0.2, 1, 3], ["кадры_начальник", -0.15, 1, 4],
  ["кадры_работник", -0.1, 1, 5], ["соискатели_начальник", -0.25, 1, 6], ["юристы_начальник", -0.22, 1, 7],
  ["profile", 0.06, 2, 1], ["главный_менеджер", -0.18, 2, 2], ["соискатели_работник", -0.08, 2, 6], ["юристы_работник", 0.02, 2, 7],
];

function Explorer() {
  return (
    <ExplorerWindow $x={292} $y={103} $w={1466} $h={1183}>
      <ExplorerTitle>
        <Slot $w={31}><Monitor w={31} h={30} /></Slot>
        <Slot $w={30}><TitleDivider /></Slot>
        <Slot $w={41}><CheckDoc /></Slot>
        <Slot $w={49}><BlankDoc /></Slot>
        <Slot $w={24}><Dropdown /></Slot>
        <Slot $w={22}><TitleDivider /></Slot>
        <TitleName $ls={-0.17}>SGUPOS</TitleName>
        <Controls>
          <Slot $w={92}><Minimize c="#b9b9b9" /></Slot>
          <Slot $w={92}><Maximize c="#b9b9b9" /></Slot>
          <Slot $w={92}><Cross c="#b9b9b9" /></Slot>
        </Controls>
      </ExplorerTitle>
      <Ribbon>
        <FileTab><Text $ls={-1.4}>Файл</Text></FileTab>
        <RibbonTab $w={143}><Text $ls={-0.8}>Главная</Text></RibbonTab>
        <RibbonTab $w={182}><Text $ls={-0.77}>Поделиться</Text></RibbonTab>
        <RibbonTab $w={100}><Text $ls={-1}>Вид</Text></RibbonTab>
        <Spacer />
        <Chevron w={18} h={10} c="#9a9a9a" t={2.5} />
        <HelpBadge>?</HelpBadge>
      </Ribbon>
      <NavBar>
        <Slot $w={40}><Arrow r={0} /></Slot>
        <Slot $w={80}><Arrow r={180} /></Slot>
        <Slot $w={16}><Chevron w={13} h={8} c="#8a8a8a" /></Slot>
        <Slot $w={59}><Arrow r={90} /></Slot>
        <AddressBox>
          <Monitor />
          <Crumb $ml={15}><Chevron w={8} h={13} c="#777" dir="right" /></Crumb>
          <Crumb $ml={19} $ls={-0.2}>Сеть</Crumb>
          <Crumb $ml={20}><Chevron w={8} h={13} c="#777" dir="right" /></Crumb>
          <Crumb $ml={17} $ls={-0.17}>SGUPOS</Crumb>
          <Spacer />
          <Slot $w={38}><Chevron w={18} h={12} c="#6d6d6d" t={3.5} /></Slot>
          <RefreshCell><Refresh /></RefreshCell>
        </AddressBox>
        <SearchBox><SearchHint $ls={0.14}>Поиск: SGUPOS</SearchHint><Loupe /></SearchBox>
      </NavBar>
      <ExplorerBody>
        <Tree>
          {tree.map((t) => (
            <TreeItem key={t.name} $nested={t.nested} $apart={t.apart} $active={t.active}>
              {t.icon}
              <Text $ls={t.ls}>{t.name}</Text>
              {t.nested && <PinHolder><Pin /></PinHolder>}
            </TreeItem>
          ))}
        </Tree>
        <Files>
          {files.map(([name, ls, col, row]) => (
            <FileTile key={name} $col={col} $row={row} $active={name === "кадры_начальник"}>
              <NetFolder />
              <FileName $ls={ls}>{name}</FileName>
            </FileTile>
          ))}
        </Files>
      </ExplorerBody>
      <StatusRow>
        <StatusCell><Text $ls={-0.4}>Элементов: 14</Text></StatusCell>
        <StatusCell><Text $ls={-0.1}>Выбран 1 элемент</Text></StatusCell>
        <ViewModes><DetailsView /><PicGlyph w={29} h={23} /></ViewModes>
      </StatusRow>
    </ExplorerWindow>
  );
}

function Settings() {
  return (
    <SettingsWindow $x={1822} $y={82} $w={1000} $h={1262}>
      <SettingsTitle>
        <Text $ls={0.25}>Параметры</Text>
        <Controls>
          <Slot $w={92}><Minimize c="#8d8d8d" /></Slot>
          <Slot $w={92}><Maximize c="#8d8d8d" /></Slot>
          <Slot $w={92}><Cross c="#8d8d8d" /></Slot>
        </Controls>
      </SettingsTitle>
      <SettingsBody>
        <SettingsHeading><OutlineGear /><Text $ls={-0.2}>Ваши данные</Text></SettingsHeading>
        <Avatar><Person /></Avatar>
        <UserName>НАЧАЛЬНИК СОИСКАТЕЛИ</UserName>
        <UserLogin>SGUPOS0\master_soisk</UserLogin>
        <SubHeading>Создать аватар</SubHeading>
        <Choice><ChoiceIcon><Webcam /></ChoiceIcon><Text $ls={0.3}>Камера</Text></Choice>
        <Choice><ChoiceIcon><ItemDoc /></ChoiceIcon><Text $ls={0}>Выберите один элемент</Text></Choice>
      </SettingsBody>
    </SettingsWindow>
  );
}

function ErrorDialog() {
  return (
    <DialogWindow $x={904} $y={486} $w={1040} $h={388}>
      <DialogTitle><Text $ls={-0.18}>Сетевая ошибка</Text><Cross c="#fff" /></DialogTitle>
      <DialogBody>
        <DialogHeading>{"Windows не может получить доступ к \\\\Sgupos\\кадры_начальник"}</DialogHeading>
        <DialogText>
          <Text $ls={-0.18}>{"Разрешение на доступ к \\\\Sgupos\\кадры_начальник отсутствует. Обратитесь к сетевому"}</Text>
          <Text $ls={-0.2}>администратору для получения доступа.</Text>
        </DialogText>
        <DialogLink>Дополнительные сведения о разрешениях в Центре справки и поддержки Windows</DialogLink>
      </DialogBody>
      <DialogFooter><CloseButton><AccessKey>З</AccessKey>акрыть</CloseButton></DialogFooter>
    </DialogWindow>
  );
}

export default function App() {
  return (
    <Screen>
      <GlobalStyle />
      <HostTitle>
        <VmIcon w={32} h={32} />
        <HostCaption $ls={-0.07}>w10ltsb_2 [Работает] - Oracle VM VirtualBox</HostCaption>
        <HostControls>
          <Slot $w={92}><Minimize c="#1a1a1a" /></Slot>
          <Slot $w={91}><Restore /></Slot>
          <Slot $w={92}><Cross c="#1a1a1a" /></Slot>
        </HostControls>
      </HostTitle>
      <HostMenu>{menu.map(([m, ls]) => <Text key={m} $ls={ls}>{m}</Text>)}</HostMenu>
      <Guest>
        <DesktopIcons>
          {shortcuts.map((s) => (
            <DesktopIcon key={s.lines[0][0]}>
              {s.art}
              <DesktopLabel>{s.lines.map(([l, ls]) => <Text key={l} $ls={ls}>{l}</Text>)}</DesktopLabel>
            </DesktopIcon>
          ))}
        </DesktopIcons>
        <GuestBar>
          <TaskButton><WinLogo /></TaskButton>
          <TaskButton $mr={6}><TaskViewGlyph /></TaskButton>
          <TaskButton $mr={2} $active $running $line={96}><FolderGlyph /></TaskButton>
          <TaskButton $running $line={80}><SolidGear /></TaskButton>
          <Spacer />
          <Slot $w={48}><TrayShield /></Slot>
          <Slot $w={48}><VBoxCube /></Slot>
          <Slot $w={48}><NetWarn /></Slot>
          <Slot $w={48}><Speaker c="#fff" /></Slot>
          <Slot $w={73}><Text $ls={0.9}>РУС</Text></Slot>
          <GuestClock><Text $ls={-0.6}>19:48</Text><Text $ls={-1}>17.07.2024</Text></GuestClock>
          <Slot $w={83}><NoteGlyph /></Slot>
          <ShowDesktop />
        </GuestBar>
        <Explorer />
        <Settings />
        <ErrorDialog />
      </Guest>
      <VmStatus>
        {devices.map((d, i) => <Slot key={i} $w={38}>{d}</Slot>)}
        <HostKey $ls={-0.6}>Ctrl</HostKey>
      </VmStatus>
      <HostBar>
        <Slot $w={129}><Widgets /></Slot>
        <Slot $w={736} />
        <AppSlot><Win11 /></AppSlot>
        <SearchPill><PillLoupe /><PillText $ls={0.7}>Search</PillText><Town /></SearchPill>
        <AppSlot><TaskView11 /></AppSlot>
        <AppSlot><Teams /></AppSlot>
        <AppSlot><Folder11 /></AppSlot>
        <AppSlot><Store /><RunningMark /></AppSlot>
        <AppSlot><Edge /></AppSlot>
        <AppSlot><Brave /></AppSlot>
        <ActiveApp><VmIcon w={49} h={48} /><RunningMark $wide /></ActiveApp>
        <Spacer />
        <Slot $w={67}><Chevron w={21} h={12} c="#2a2c30" dir="up" /></Slot>
        <Slot $w={85}><Text $ls={0.5}>ENG</Text></Slot>
        <Slot $w={8} />
        <Slot $w={48}><MonitorLine /></Slot>
        <Slot $w={48}><Speaker c="#2a2c30" /></Slot>
        <HostClock><Text $ls={0.25}>7:48 PM</Text><Text $ls={0.15}>7/17/2024</Text></HostClock>
        <Slot $w={58}><Bell /></Slot>
        <Slot $w={28} />
      </HostBar>
    </Screen>
  );
}
